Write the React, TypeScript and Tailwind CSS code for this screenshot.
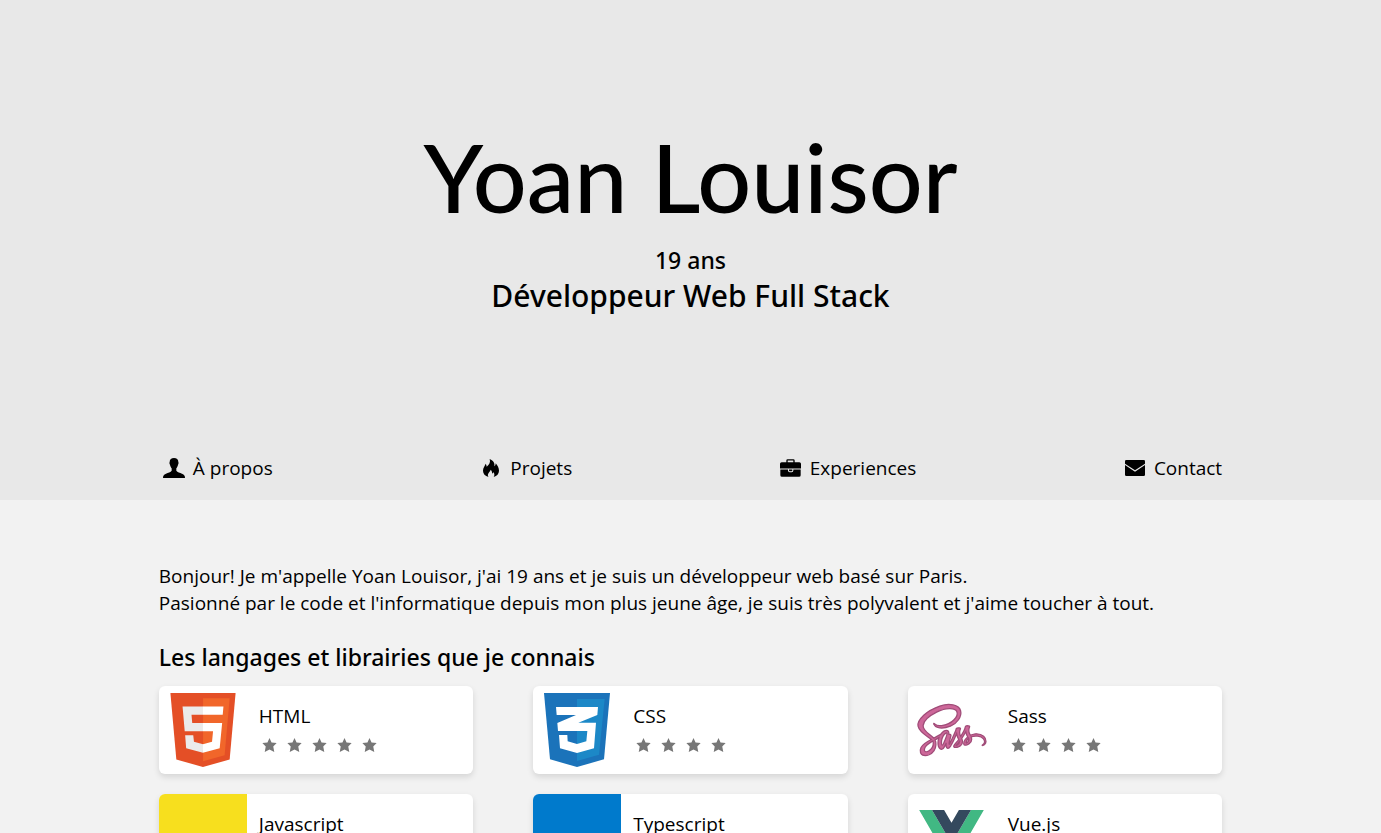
import type { ReactNode } from "react";
import { FaSass } from "react-icons/fa";

function PersonIcon() {
  return (
    <svg viewBox="0 0 66 60" className="h-5 w-[22px]" fill="currentColor" aria-hidden="true">
      <path d="M33 0C41 0 46 4 46 12C47 14 47 18 45 20C44 25 42 28 40 31V38C43 43 51 44 57 47C64 50 66 53 66 60H0C0 53 2 50 9 47C15 44 23 43 26 38V31C24 28 22 25 21 20C19 18 19 14 20 12C20 4 25 0 33 0Z" />
    </svg>
  );
}

function FlameIcon() {
  return (
    <svg viewBox="0 0 48 54" className="h-[18px] w-4" fill="currentColor" aria-hidden="true">
      <path d="M20 0C32 5 36 13 34 22C37 20 38 17 38 13C44 20 48 27 48 35C48 44 42 51 32 54C35 49 35 44 31 40C30 42 29 43 27 44C28 39 26 35 23 32C22 38 16 40 15 46C14 50 15 52 17 54C6 51 0 44 0 35C0 27 5 21 8 14C10 17 11 20 11 23C19 17 23 9 20 0Z" />
    </svg>
  );
}

function BriefcaseIcon() {
  return (
    <svg viewBox="0 0 63 53" className="h-[18px] w-[21px]" fill="currentColor" aria-hidden="true">
      <path d="M19 9V4Q19 0 23 0H40Q44 0 44 4V9H58Q63 9 63 14V28H0V14Q0 9 5 9ZM23 9H40V4H23Z" fillRule="evenodd" />
      <path d="M1 31H24V34Q24 39 29 39H35Q40 39 40 34V31H62V48Q62 53 57 53H6Q1 53 1 48Z" />
      <path d="M27 31H37V34Q37 36 35 36H29Q27 36 27 34Z" />
    </svg>
  );
}

function MailIcon() {
  return (
    <svg viewBox="0 0 60 48" className="h-4 w-5" fill="currentColor" aria-hidden="true">
      <path d="M4 0H56Q60 0 60 4V11L30 31L0 11V4Q0 0 4 0Z" />
      <path d="M0 15L30 35L60 15V44Q60 48 56 48H4Q0 48 0 44Z" />
    </svg>
  );
}

function Star() {
  return (
    <svg viewBox="0 0 42 41" className="h-[14px] w-[21px]" fill="#777777" aria-hidden="true">
      <path d="M21 0L27 13L42 15L32 25L35 41L21 34L7 41L10 25L0 15L15 13Z" />
    </svg>
  );
}

function HtmlLogo() {
  return (
    <svg viewBox="30 0 451 512" className="h-[74px] w-[66px]" aria-hidden="true">
      <path fill="#e44f26" d="M71 460L30 0H481L440 460L255 512Z" />
      <path fill="#f1662a" d="M256 472L405 431L440 37H256Z" />
      <path fill="#ebebeb" d="M256 208H181L176 150H256V94H114L129 265H256ZM256 355L193 338L188 293H132L139 382L255 414Z" />
      <path fill="#ffffff" d="M255 208V265H325L318 338L255 355V414L371 382L388 208ZM255 94V150H392L397 94Z" />
    </svg>
  );
}

function CssLogo() {
  return (
    <svg viewBox="57 39 198 222" className="h-[74px] w-[66px]" aria-hidden="true">
      <path fill="#1b73ba" d="M57 39H255L237 238L156 261L75 238Z" />
      <path fill="#1c88c7" d="M156 57H239L222 224L156 243Z" />
      <path fill="#ffffff" d="M93 81H219L217 105L160 128H213L207 205L156 219L105 205L102 165H127L128 184L156 192L184 184L187 153H99L97 129L153 105H95Z" />
    </svg>
  );
}

function SassLogo() {
  return (
    <FaSass
      className="h-[56px] w-[68px] overflow-visible text-[#cd6799]"
      stroke="#a04c78"
      strokeWidth={12}
      aria-hidden="true"
    />
  );
}

function VueLogo() {
  return (
    <svg viewBox="0 0 262 227" className="h-[56px] w-[65px]" aria-hidden="true">
      <path fill="#41b883" d="M0 0H52L131 136L210 0H262L131 227Z" />
      <path fill="#34495e" d="M52 0H101L131 52L161 0H210L131 136Z" />
    </svg>
  );
}

const links: { label: string; href: string; icon: ReactNode }[] = [
  { label: "À propos", href: "#a-propos", icon: <PersonIcon /> },
  { label: "Projets", href: "#projets", icon: <FlameIcon /> },
  { label: "Experiences", href: "#experiences", icon: <BriefcaseIcon /> },
  { label: "Contact", href: "#contact", icon: <MailIcon /> },
];

const skills: { name: string; stars: number; logo: ReactNode }[] = [
  { name: "HTML", stars: 5, logo: <HtmlLogo /> },
  { name: "CSS", stars: 4, logo: <CssLogo /> },
  { name: "Sass", stars: 4, logo: <SassLogo /> },
  { name: "Javascript", stars: 5, logo: <div className="size-full bg-[#f7df1e]" /> },
  { name: "Typescript", stars: 4, logo: <div className="size-full bg-[#007acc]" /> },
  { name: "Vue.js", stars: 4, logo: <VueLogo /> },
];

export default function App() {
  return (
    <div className="min-h-screen bg-[#f2f2f2] font-['Open_Sans','Noto_Sans',sans-serif] text-[19px] leading-[27px] text-black">
      <header className="flex min-h-[500px] flex-col bg-[#e8e8e8]">
        <div className="flex flex-1 flex-col items-center justify-center pb-5 text-center font-['Noto_Sans',sans-serif] font-medium">
          <h1 className="mb-3 font-['Lato',sans-serif] text-[95px] leading-[112px]">Yoan Louisor</h1>
          <p className="text-[23px] leading-8">19 ans</p>
          <p className="text-[30px] leading-10">Développeur Web Full Stack</p>
        </div>
        <nav className="mx-auto w-[77%] pb-[18px]">
          <ul className="flex justify-between">
            {links.map((link) => (
              <li key={link.label}>
                <a href={link.href} className="flex items-center gap-1">
                  <span className="flex w-[30px] justify-center pb-[2px]">{link.icon}</span>
                  {link.label}
                </a>
              </li>
            ))}
          </ul>
        </nav>
      </header>
      <main className="mx-auto w-[77%] pt-[63px] pb-16">
        <p>
          Bonjour! Je m'appelle Yoan Louisor, j'ai 19 ans et je suis un développeur web basé sur Paris.
          <br />
          Pasionné par le code et l'informatique depuis mon plus jeune âge, je suis très polyvalent et j'aime toucher à tout.
        </p>
        <h2 className="mt-6 mb-[13px] font-['Noto_Sans',sans-serif] text-[23px] leading-8 font-medium">
          Les langages et librairies que je connais
        </h2>
        <ul className="grid grid-cols-3 gap-x-[60px] gap-y-5">
          {skills.map((skill) => (
            <li
              key={skill.name}
              className="flex h-[88px] overflow-hidden rounded-md bg-white shadow-[0_3px_6px_rgba(0,0,0,0.12)]"
            >
              <div className="flex w-[88px] shrink-0 items-center justify-center">{skill.logo}</div>
              <div className="flex flex-col justify-center pt-[2px] pl-3">
                <h3>{skill.name}</h3>
                <div className="flex h-[30px] items-center gap-1" role="img" aria-label={`${skill.stars} / 5`}>
                  {Array.from({ length: skill.stars }, (_, i) => (
                    <Star key={i} />
                  ))}
                </div>
              </div>
            </li>
          ))}
        </ul>
      </main>
    </div>
  );
}
